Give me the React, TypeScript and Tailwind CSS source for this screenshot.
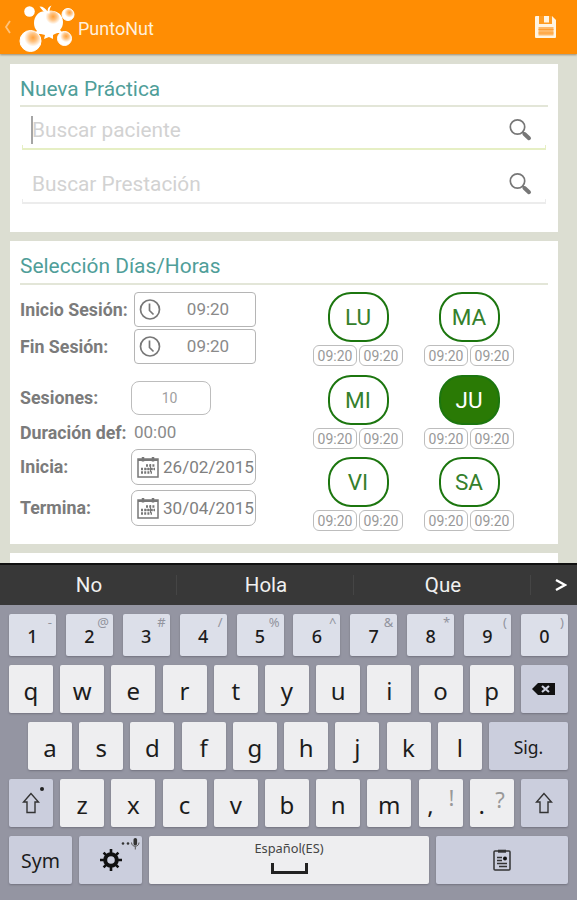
import { ReactNode } from "react";
import clsx from "clsx";

const SUGGESTIONS = ["No", "Hola", "Que"];

const NUMBER_KEYS = [
  { key: "1", alt: "-" },
  { key: "2", alt: "@" },
  { key: "3", alt: "#" },
  { key: "4", alt: "/" },
  { key: "5", alt: "%" },
  { key: "6", alt: "^" },
  { key: "7", alt: "&" },
  { key: "8", alt: "*" },
  { key: "9", alt: "(" },
  { key: "0", alt: ")" },
];

const DAYS = [
  { name: "LU", selected: false },
  { name: "MA", selected: false },
  { name: "MI", selected: false },
  { name: "JU", selected: true },
  { name: "VI", selected: false },
  { name: "SA", selected: false },
];

function Logo() {
  return (
    <svg width="58" height="50" viewBox="0 0 58 50" className="shrink-0">
      <defs>
        <radialGradient id="ball" cx="0.62" cy="0.34" r="0.42">
          <stop offset="0" stopColor="#ffa23c" />
          <stop offset="0.45" stopColor="#ffc280" />
          <stop offset="1" stopColor="#fff" />
        </radialGradient>
      </defs>
      <circle cx="10.500" cy="8.500" r="5.300" fill="#fff" />
      <path
        d="M29 9c-6-3-14 2-14 11 0 3 1 6 3 8-1 1-2 1-3 2 2 1 4 1 7 1l4 1-1 4 5-2 4 2 0-4c2-1 3-2 5-2l5 0-3-3c2-2 3-5 3-8 0-9-9-13-15-10z"
        fill="#fff"
      />
      <circle cx="32" cy="16.500" r="9" fill="url(#ball)" />
      <path d="M20.500 3.500c4 0 6 2 8 5 0-3 1-5 4-6-2 3-2 5-2 8-5 0-7-3-10-7z" fill="#fff" />
      <circle cx="49" cy="11.500" r="6" fill="url(#ball)" stroke="#fff" />
      <circle cx="45.500" cy="35.500" r="7" fill="url(#ball)" stroke="#fff" />
      <circle cx="11.500" cy="38" r="10.500" fill="url(#ball)" stroke="#fff" />
    </svg>
  );
}

function SaveIcon() {
  return (
    <svg width="24" height="24" viewBox="0 0 24 24">
      <path d="M2 1h16l4 4v17a1 1 0 0 1-1 1H2a1 1 0 0 1-1-1V2a1 1 0 0 1 1-1z" fill="#fff4e2" />
      <path d="M5 1h13v8H5z" fill="#ff9c22" />
      <path d="M10 1h5v6.500h-5z" fill="#fff4e2" />
      <path d="M4.500 12h15v8.500h-15z" fill="#ffb866" />
      <path d="M4.500 14.500h15M4.500 18h15" stroke="#ff9e33" />
    </svg>
  );
}

function SearchIcon() {
  return (
    <svg width="24" height="24" viewBox="0 0 24 24" fill="none" stroke="#777">
      <circle cx="9.500" cy="9" r="7.200" strokeWidth="1.700" />
      <path d="M14.500 14l2 2" strokeWidth="2" />
      <path d="M16.500 16l4.500 4.200" strokeWidth="4" strokeLinecap="round" />
    </svg>
  );
}

function ClockIcon() {
  return (
    <svg width="22" height="22" viewBox="0 0 22 22" fill="none" stroke="#777" strokeWidth="1.700" className="shrink-0">
      <circle cx="11" cy="10.500" r="9.500" />
      <path d="M10.500 4.500v7l4 4" />
    </svg>
  );
}

function CalendarIcon() {
  return (
    <svg width="22" height="22" viewBox="0 0 22 22" fill="none" stroke="#777" className="shrink-0">
      <path d="M1 3h20v18H1z" strokeWidth="1.500" />
      <path d="M1 4h20" strokeWidth="2" />
      <path d="M6 1v4.500M16 1v4.500" strokeWidth="2.500" />
      <path d="M9 9.500h9M4 13h14M4 16.500h11" strokeWidth="2.400" strokeDasharray="2 1.200" />
      <path d="M13.500 8v8M9 13h9" strokeWidth="1" />
    </svg>
  );
}

function ShiftIcon() {
  return (
    <svg width="18" height="22" viewBox="0 0 18 22" fill="none" stroke="#333" strokeWidth="1.400">
      <path d="M9 1.500L1.500 10H5v10.500h8V10h3.500z" />
    </svg>
  );
}

function BackspaceIcon() {
  return (
    <svg width="24" height="12" viewBox="0 0 24 12">
      <path d="M0 6l6-6h17v12H6z" fill="#111" />
      <path d="M10 3l7 6M17 3l-7 6" stroke="#cdd0de" strokeWidth="2.200" />
    </svg>
  );
}

function GearIcon() {
  return (
    <svg width="22" height="22" viewBox="0 0 22 22" fill="none" stroke="#111">
      <circle cx="11" cy="11" r="5.800" strokeWidth="4" />
      <path
        d="M11 0v4M11 18v4M0 11h4M18 11h4M3.600 3.600l3 3M15.400 15.400l3 3M18.400 3.600l-3 3M6.600 15.400l-3 3"
        strokeWidth="2.600"
      />
    </svg>
  );
}

function MicIcon() {
  return (
    <svg width="19" height="12" viewBox="0 0 19 12" fill="#333">
      <circle cx="2" cy="5.500" r="1.300" />
      <circle cx="7" cy="5.500" r="1.300" />
      <rect x="12.500" y="0" width="3.600" height="7.500" rx="1.800" />
      <path d="M10.500 4.500c0 5 7.500 5 7.500 0M14.300 8.500V11.500" fill="none" stroke="#555" />
    </svg>
  );
}

function ClipboardIcon() {
  return (
    <svg width="18" height="22" viewBox="0 0 18 22" fill="none" stroke="#333">
      <rect x="1" y="2" width="16" height="19" rx="1" strokeWidth="1.500" />
      <path d="M5 2.200h8" strokeWidth="3" />
      <path d="M4 8.500h5M4 11.500h5M4 14.500h10M6 17.500h8" strokeWidth="1.300" />
      <circle cx="12" cy="9.500" r="2" fill="#111" stroke="none" />
    </svg>
  );
}

function SearchField({ placeholder, active }: { placeholder: string; active?: boolean }) {
  return (
    <div className="mx-[2px]">
      <div className="flex h-[30px] items-center justify-between pl-[9px] pr-[14px]">
        <div className="flex items-center">
          <span className={clsx("h-7 w-[2px]", active && "bg-[#a5a5a5]")} />
          <span className="-ml-[1px] text-[20.8px] leading-[26px] text-[#d2d2d2]">{placeholder}</span>
        </div>
        <SearchIcon />
      </div>
      <div
        className={clsx(
          "h-[5px] border-x border-b-2",
          active ? "border-[#e6efc4]" : "border-[#ececec]"
        )}
      />
    </div>
  );
}

function SectionTitle({ className, children }: { className: string; children: ReactNode }) {
  return (
    <h2 className={clsx("border-b-2 border-[#e3e6d8] pt-[11px] text-[20.9px] leading-[28px] text-[#4f9e99]", className)}>
      {children}
    </h2>
  );
}

function Row({ label, className, children }: { label: string; className: string; children: ReactNode }) {
  return (
    <div className={clsx("flex items-center", className)}>
      <span className="w-[111px] shrink-0 whitespace-nowrap text-[17.8px] font-bold leading-6 text-[#7b7b7b]">
        {label}
      </span>
      {children}
    </div>
  );
}

function TimeBox({ value }: { value: string }) {
  return (
    <div className="ml-[3px] flex h-[35px] w-[122px] items-center rounded-[4px] border border-[#b5b5b5] pl-1">
      <ClockIcon />
      <span className="flex-1 pt-px text-center text-[17px] text-[#8a8a8a]">{value}</span>
    </div>
  );
}

function DateBox({ value }: { value: string }) {
  return (
    <div className="flex h-9 w-[125px] items-center gap-[4px] rounded-[7px] border border-[#b5b5b5] pl-[5px]">
      <CalendarIcon />
      <span className="pt-px text-[17.1px] text-[#808080]">{value}</span>
    </div>
  );
}

function SmallTime() {
  return (
    <span className="flex h-[21px] w-[44px] items-center justify-center rounded-[6px] border border-[#bdbdbd] pt-px text-[14px] leading-none text-[#999]">
      09:20
    </span>
  );
}

function Day({ name, selected }: { name: string; selected: boolean }) {
  return (
    <div className="flex h-[82.500px] flex-col items-center">
      <div
        className={clsx(
          "flex h-[50px] w-[61px] items-center justify-center rounded-[23px] border-2 border-[#1c760f] pt-[2px] text-[22.5px]",
          selected ? "bg-[#2a7a05] text-white" : "text-[#35802c]"
        )}
      >
        {name}
      </div>
      <div className="mt-[3px] flex gap-[2px]">
        <SmallTime />
        <SmallTime />
      </div>
    </div>
  );
}

function Key({ className, children, tone = "light" }: { className?: string; children: ReactNode; tone?: "light" | "number" | "dark" }) {
  return (
    <div
      className={clsx(
        "relative flex h-12 shrink-0 items-center justify-center rounded-[2px] text-[24px] text-[#1c1c1c] shadow-[0_1px_2px_#73737f]",
        tone === "light" && "bg-[#eeeef0]",
        tone === "number" && "bg-[#dcdfe9]",
        tone === "dark" && "bg-[#cbcedd]",
        className ?? "w-11"
      )}
    >
      {children}
    </div>
  );
}

function Letters({ keys }: { keys: string }) {
  return (
    <>
      {keys.split("").map((k) => (
        <Key key={k}>
          <span className="mt-[3px]">{k}</span>
        </Key>
      ))}
    </>
  );
}

function Keyboard() {
  return (
    <div className="h-[295px] bg-[#9495a2] px-[9px] pt-[9px] font-['Noto_Sans',sans-serif]">
      <div className="flex justify-between">
        {NUMBER_KEYS.map((n) => (
          <Key key={n.key} tone="number" className="h-[42px]! w-[47px]">
            <span className="mt-[3px] text-[18px] font-medium">{n.key}</span>
            <span className="absolute right-[4px] top-0 text-[13px] leading-[17px] text-[#92949e]">{n.alt}</span>
          </Key>
        ))}
      </div>
      <div className="mt-[9px] flex justify-between">
        <Letters keys="qwertyuiop" />
        <Key tone="dark" className="w-[47px]">
          <BackspaceIcon />
        </Key>
      </div>
      <div className="mt-[9px] flex justify-between pl-[19px]">
        <Letters keys="asdfghjkl" />
        <Key tone="dark" className="w-[79px] text-[17.5px]!">
          <span className="mt-[2px]">Sig.</span>
        </Key>
      </div>
      <div className="mt-[9px] flex justify-between">
        <Key tone="dark">
          <ShiftIcon />
          <span className="absolute right-[9px] top-[8px] h-1 w-1 rounded-full bg-[#222]" />
        </Key>
        <Letters keys="zxcvbnm" />
        <Key>
          <span className="-ml-5 mt-[3px]">,</span>
          <span className="absolute right-[8px] top-[4px] text-[22px] leading-7 text-[#999]">!</span>
        </Key>
        <Key>
          <span className="-ml-5 mt-[3px]">.</span>
          <span className="absolute right-[9px] top-[6px] text-[22px] leading-7 text-[#999]">?</span>
        </Key>
        <Key tone="dark" className="w-[47px]">
          <ShiftIcon />
        </Key>
      </div>
      <div className="mt-[9px] flex justify-between">
        <Key tone="dark" className="w-[63px] text-[19.5px]!">
          <span className="mt-[2px]">Sym</span>
        </Key>
        <Key tone="dark" className="w-[63px]">
          <GearIcon />
          <span className="absolute right-[2px] top-[2px] flex">
            <MicIcon />
          </span>
        </Key>
        <Key className="w-[280px] flex-col">
          <span className="-mt-[8px] text-[12.8px] leading-[18px] text-[#444]">Español(ES)</span>
          <span className="mt-[6px] h-[11px] w-[37px] border-x-[3px] border-b-[3px] border-[#222]" />
        </Key>
        <Key tone="dark" className="w-[132px]">
          <ClipboardIcon />
        </Key>
      </div>
    </div>
  );
}

export default function App() {
  return (
    <div className="flex h-[900px] w-[577px] flex-col overflow-hidden bg-[#dcded2] font-[Roboto,sans-serif]">
      <header className="z-10 flex h-[54px] shrink-0 items-center bg-[#ff8d03] pl-[4px] pr-[19px] shadow-[0_1px_2px_#9c8c72]">
        <svg width="8" height="14" viewBox="0 0 8 14" fill="none" stroke="#ffc27a" strokeWidth="1.800">
          <path d="M6 1L2 7l4 6" />
        </svg>
        <div className="ml-[7px] pt-px">
          <Logo />
        </div>
        <h1 className="ml-[1px] mt-[3px] flex-1 text-[18px] text-[#fff0dc]">PuntoNut</h1>
        <SaveIcon />
      </header>

      <main className="h-[509px] shrink-0 overflow-hidden pl-[10px] pr-[19px] pt-[10px]">
        <section className="h-[168px] bg-white px-[10px]">
          <SectionTitle className="h-[43px]">Nueva Práctica</SectionTitle>
          <div className="pt-[8px]">
            <SearchField placeholder="Buscar paciente" active />
          </div>
          <div className="pt-[19px]">
            <SearchField placeholder="Buscar Prestación" />
          </div>
        </section>

        <section className="mt-[9px] h-[303px] bg-white px-[10px]">
          <SectionTitle className="h-[44px]">Selección Días/Horas</SectionTitle>
          <div className="flex pt-[7px]">
            <div className="w-[293px]">
              <Row label="Inicio Sesión:" className="h-[35px]">
                <TimeBox value="09:20" />
              </Row>
              <Row label="Fin Sesión:" className="mt-[2px] h-[35px]">
                <TimeBox value="09:20" />
              </Row>
              <Row label="Sesiones:" className="mt-[17px] h-[34px]">
                <div className="flex h-[34px] w-[80px] items-center justify-center rounded-[8px] border border-[#bdbdbd] pr-[3px] text-[14px] text-[#a0a0a0]">
                  10
                </div>
              </Row>
              <Row label="Duración def:" className="h-[34px] pt-[2px]">
                <span className="ml-[3px] text-[17px] text-[#8a8a8a]">00:00</span>
              </Row>
              <Row label="Inicia:" className="h-9">
                <DateBox value="26/02/2015" />
              </Row>
              <Row label="Termina:" className="mt-[5px] h-9">
                <DateBox value="30/04/2015" />
              </Row>
            </div>
            <div className="grid grid-cols-[90px_90px] content-start gap-x-[21px]">
              {DAYS.map((d) => (
                <Day key={d.name} name={d.name} selected={d.selected} />
              ))}
            </div>
          </div>
        </section>

        <section className="mt-[9px] h-[20px] bg-white" />
      </main>

      <div className="flex h-[42px] shrink-0 items-center border-t-2 border-[#111] bg-[#383838] text-[20.5px] text-[#f0f0f0]">
        {SUGGESTIONS.map((s) => (
          <div key={s} className="flex h-5 w-[177px] items-center justify-center border-r border-[#454545] pl-[2px] pt-px">
            {s}
          </div>
        ))}
        <svg width="12" height="14" viewBox="0 0 12 14" fill="none" stroke="#fff" strokeWidth="2.400" className="ml-[24px]">
          <path d="M1 2l9 5-9 5" />
        </svg>
      </div>

      <Keyboard />
    </div>
  );
}
